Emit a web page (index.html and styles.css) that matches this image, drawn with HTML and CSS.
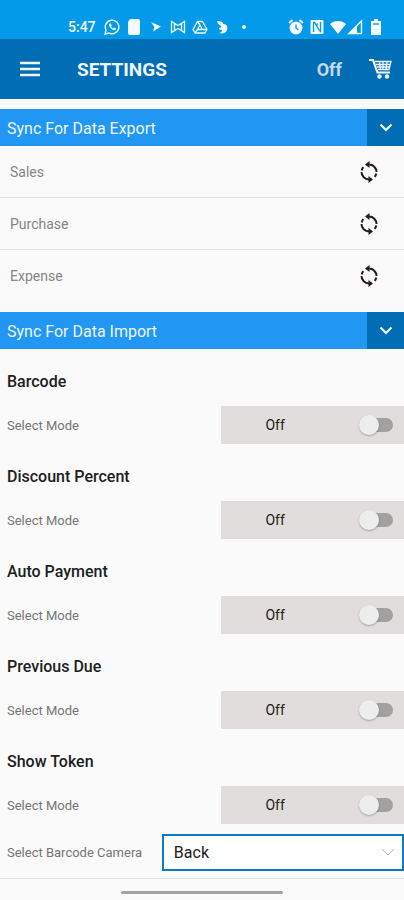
FILE: index.html
```html
<!DOCTYPE html>
<html lang="en">
<head>
<meta charset="utf-8">
<meta name="viewport" content="width=device-width, initial-scale=1">
<title>Settings</title>
<link rel="stylesheet" href="styles.css">
</head>
<body>
<svg class="defs" aria-hidden="true">
  <symbol id="sync" viewBox="0 0 24 24">
    <g fill="none" stroke="currentColor" stroke-width="2">
      <path d="M11 4.500h1a7.500 7.500 0 0 1 7.500 7.500M19.300 13.500a8 8 0 0 1-1.600 3.300"/>
      <path d="M13 19.500h-1a7.500 7.500 0 0 1-7.500-7.500M4.700 10.500a8 8 0 0 1 1.600-3.300"/>
    </g>
    <path fill="currentColor" d="M12.500 1v7L8 4.500zM11.500 16v7l4.500-3.500z"/>
  </symbol>
  <symbol id="chevron" viewBox="0 0 16 16">
    <path d="M2.500 4.500L8 10l5.500-5.500" fill="none" stroke="currentColor" stroke-width="2.200"/>
  </symbol>
</svg>

<div class="status">
  <time class="clock">5:47</time>
  <div class="icons">
    <svg viewBox="0 0 16 16"><path d="M1 15l1-4a6.800 6.800 0 1 1 3 3z" fill="none" stroke="currentColor" stroke-width="1.400"/><path d="M5.500 4.500c-2 2 3 8 6 6.500l.5-1.500-2-1-1 1c-1-.5-1.600-1.200-2-2l.7-1-.9-2z" fill="currentColor"/></svg>
    <svg viewBox="0 0 16 16"><path d="M4 0h8q2 0 2 2v12q0 2-2 2H4q-2 0-2-2V3z" fill="currentColor"/></svg>
    <svg viewBox="0 0 16 16"><path d="M3 3l10 4.500-8 5 1.500-4.500z" fill="currentColor"/></svg>
    <svg viewBox="0 0 16 16"><path d="M1.500 13.500v-11l6.500 4 6.500-4v11l-6.500-4zM4.500 4.500v7M11.500 4.500v7" fill="none" stroke="currentColor" stroke-width="1.300"/></svg>
    <svg viewBox="0 0 16 16"><path d="M5.500 2.500h5l4.500 8-2 3.500H3l-2-3.500zM8 6l2.500 4.500h-5zM5.500 2.500L8 6M15 10.500h-4.500M3 14l2.500-3.500" fill="none" stroke="currentColor" stroke-width="1.300" stroke-linejoin="round"/></svg>
    <svg viewBox="0 0 16 16"><path d="M3 2c4 0 6 1 6.500 3C13 5 14 8 13 11c-1 3-4 4-8 3 2-.5 3-1.500 3-3-2 0-3-.5-3-2 1.500 0 2.500-1 2-2C5.500 6 3.500 5 3 2z" fill="currentColor"/></svg>
    <svg viewBox="0 0 16 16"><circle cx="8" cy="8" r="2" fill="currentColor"/></svg>
  </div>
  <div class="icons icons-system">
    <svg viewBox="0 0 16 16"><circle cx="8" cy="9" r="6.500" fill="currentColor"/><path d="M1 4l3.500-3M15 4l-3.500-3" stroke="currentColor" stroke-width="1.800"/><path class="cut" d="M8 5.500V9l2.500 2"/></svg>
    <svg viewBox="0 0 16 16"><rect x="1.500" y="1" width="13" height="14" rx="1" fill="currentColor"/><path class="cut" d="M4.500 13V3.500h1l5 8M11.500 3v9.500h-1M8 4.500V8"/></svg>
    <svg viewBox="0 0 16 16"><path d="M0 5c4-4 12-4 16 0l-8 10z" fill="currentColor"/></svg>
    <svg class="signal" viewBox="0 0 16 16"><path d="M2 14.500L14.500 2v12.500z" fill="none" stroke="currentColor" stroke-width="1.400"/><path d="M1 15l9-9v9z" fill="currentColor"/></svg>
    <svg viewBox="0 0 16 16"><path d="M6 0h4v2h3v14H3V2h3z" fill="currentColor"/><path class="cut" d="M5 5h6"/></svg>
  </div>
</div>

<header class="appbar">
  <button class="icon-button" aria-label="Menu"><svg class="menu" viewBox="0 0 20 16"><path d="M0 2h20M0 8h20M0 14h20" stroke="currentColor" stroke-width="2.400"/></svg></button>
  <h1>SETTINGS</h1>
  <button class="mode">Off</button>
  <button class="icon-button" aria-label="Cart"><svg class="cart" viewBox="0 0 24 22"><path d="M1 2h4l4.500 12.500H22" fill="none" stroke="currentColor" stroke-width="2.200"/><path d="M7 3.500h16l-2 8H9.500M8 6.500h14M9 9h12M11.500 4l1 8M15 4v8M19 4l-1 8" fill="none" stroke="currentColor" stroke-width="1.300"/><circle cx="11.500" cy="18.500" r="2.200" fill="currentColor"/><circle cx="19" cy="18.500" r="2.200" fill="currentColor"/></svg></button>
</header>

<main>
  <section class="section">
    <div class="section-bar">
      <h2>Sync For Data Export</h2>
      <button aria-label="Toggle data export"><svg><use href="#chevron"/></svg></button>
    </div>
    <ul class="sync-list">
      <li>Sales <button aria-label="Sync sales"><svg><use href="#sync"/></svg></button></li>
      <li>Purchase <button aria-label="Sync purchase"><svg><use href="#sync"/></svg></button></li>
      <li>Expense <button aria-label="Sync expense"><svg><use href="#sync"/></svg></button></li>
    </ul>
  </section>

  <section class="section">
    <div class="section-bar">
      <h2>Sync For Data Import</h2>
      <button aria-label="Toggle data import"><svg><use href="#chevron"/></svg></button>
    </div>
    <div class="settings">
      <div class="setting">
        <h3>Barcode</h3>
        <div class="setting-row"><label for="barcode">Select Mode</label><div class="switch"><span>Off</span><input type="checkbox" id="barcode"></div></div>
      </div>
      <div class="setting">
        <h3>Discount Percent</h3>
        <div class="setting-row"><label for="discount">Select Mode</label><div class="switch"><span>Off</span><input type="checkbox" id="discount"></div></div>
      </div>
      <div class="setting">
        <h3>Auto Payment</h3>
        <div class="setting-row"><label for="payment">Select Mode</label><div class="switch"><span>Off</span><input type="checkbox" id="payment"></div></div>
      </div>
      <div class="setting">
        <h3>Previous Due</h3>
        <div class="setting-row"><label for="due">Select Mode</label><div class="switch"><span>Off</span><input type="checkbox" id="due"></div></div>
      </div>
      <div class="setting">
        <h3>Show Token</h3>
        <div class="setting-row"><label for="token">Select Mode</label><div class="switch"><span>Off</span><input type="checkbox" id="token"></div></div>
      </div>
      <div class="camera">
        <label for="camera">Select Barcode Camera</label>
        <div class="select">
          <select id="camera"><option>Back</option><option>Front</option></select>
          <svg viewBox="0 0 16 16"><path d="M2 5l6 6 6-6" fill="none" stroke="currentColor"/></svg>
        </div>
      </div>
    </div>
  </section>
</main>
<footer class="gesture"><div></div></footer>
</body>
</html>
```

FILE: styles.css
```css
* { box-sizing: border-box; }

body {
  margin: 0;
  background: #fafafa;
  color: #1c1c1c;
  font-family: Roboto, "Liberation Sans", sans-serif;
  font-size: 14px;
}

h1, h2, h3, ul { margin: 0; padding: 0; }

button {
  display: flex;
  align-items: center;
  justify-content: center;
  border: 0;
  padding: 0;
  background: none;
  color: inherit;
  font: inherit;
}

svg { display: block; }
.defs { display: none; }

.status {
  display: flex;
  align-items: center;
  height: 39px;
  padding: 14px 20px 0 68px;
  background: #039be9;
  color: #f2fbff;
}

.clock {
  width: 36px;
  font-size: 14px;
  font-weight: 500;
}

.icons { display: flex; gap: 6px; }
.icons svg { width: 16px; height: 16px; }
.icons-system { margin-left: auto; gap: 5px; }
.icons .signal { margin-left: -4px; }
.cut { fill: none; stroke: #039be9; stroke-width: 1.3; }

.appbar {
  display: flex;
  align-items: center;
  height: 60px;
  padding: 0 12px 0 20px;
  background: #016db5;
  color: #eef7ff;
}

.menu { width: 20px; height: 16px; }
.cart { width: 24px; height: 22px; }

.appbar h1 {
  flex: 1;
  margin-left: 37px;
  font-size: 19px;
  font-weight: 700;
}

.mode {
  margin-right: 26px;
  color: #c3d8ed;
  font-size: 18px;
  font-weight: 700;
}

.section { padding-top: 10px; }

.section-bar {
  display: flex;
  height: 37px;
  background: #2196f3;
  color: #eef8ff;
}

.section-bar h2 {
  flex: 1;
  padding-left: 7px;
  font-size: 16px;
  font-weight: 400;
  line-height: 39px;
}

.section-bar button { width: 37px; background: #016db5; }
.section-bar svg { width: 16px; height: 16px; }

.sync-list { list-style: none; color: #858585; }

.sync-list li {
  display: flex;
  align-items: center;
  justify-content: space-between;
  height: 52px;
  padding: 0 23px 0 10px;
  border-bottom: 1px solid #e2e2e2;
}

.sync-list li:last-child { border-bottom: 0; }
.sync-list button { color: #241a1a; }
.sync-list svg { width: 24px; height: 24px; }

.settings { padding-top: 14px; color: #757575; }

.settings label { font-size: 13px; }

.setting { padding-bottom: 14px; }

.setting h3 {
  padding-left: 7px;
  color: #202020;
  font-size: 16px;
  font-weight: 500;
  line-height: 38px;
}

.setting-row {
  display: flex;
  align-items: center;
  justify-content: space-between;
  margin-top: 5px;
  padding-left: 7px;
}

.switch {
  display: flex;
  align-items: center;
  justify-content: space-between;
  width: 46%;
  height: 38px;
  padding: 0 11px 0 44px;
  background: #e0dddc;
  color: #202020;
}

.switch input {
  position: relative;
  appearance: none;
  width: 32px;
  height: 14px;
  margin: 0;
  border-radius: 7px;
  background: #a2a1a0;
}

.switch input::before {
  content: "";
  position: absolute;
  top: -3px;
  left: -2px;
  width: 20px;
  height: 20px;
  border-radius: 50%;
  background: #eeeded;
  box-shadow: 0 1px 2px #0004;
}

.switch input:checked::before { left: 15px; }

.camera {
  display: flex;
  align-items: center;
  justify-content: space-between;
  padding: 0 0 7px 7px;
  border-bottom: 1px solid #e2e2e2;
}

.setting:nth-last-child(2) { padding-bottom: 10px; }

.select {
  position: relative;
  width: 61%;
}

.select select {
  appearance: none;
  width: 100%;
  height: 37px;
  padding: 0 10px;
  border: 2px solid #0b7bc8;
  border-radius: 0;
  background: #fff;
  color: #202020;
  font: inherit;
  font-size: 16px;
}

.select svg {
  position: absolute;
  top: 10px;
  right: 8px;
  width: 16px;
  height: 16px;
  color: #b5b5b5;
  pointer-events: none;
}

.gesture {
  display: flex;
  justify-content: center;
  padding-top: 12px;
}

.gesture div {
  width: 40%;
  height: 3px;
  border-radius: 2px;
  background: #a3a3a3;
}
```
